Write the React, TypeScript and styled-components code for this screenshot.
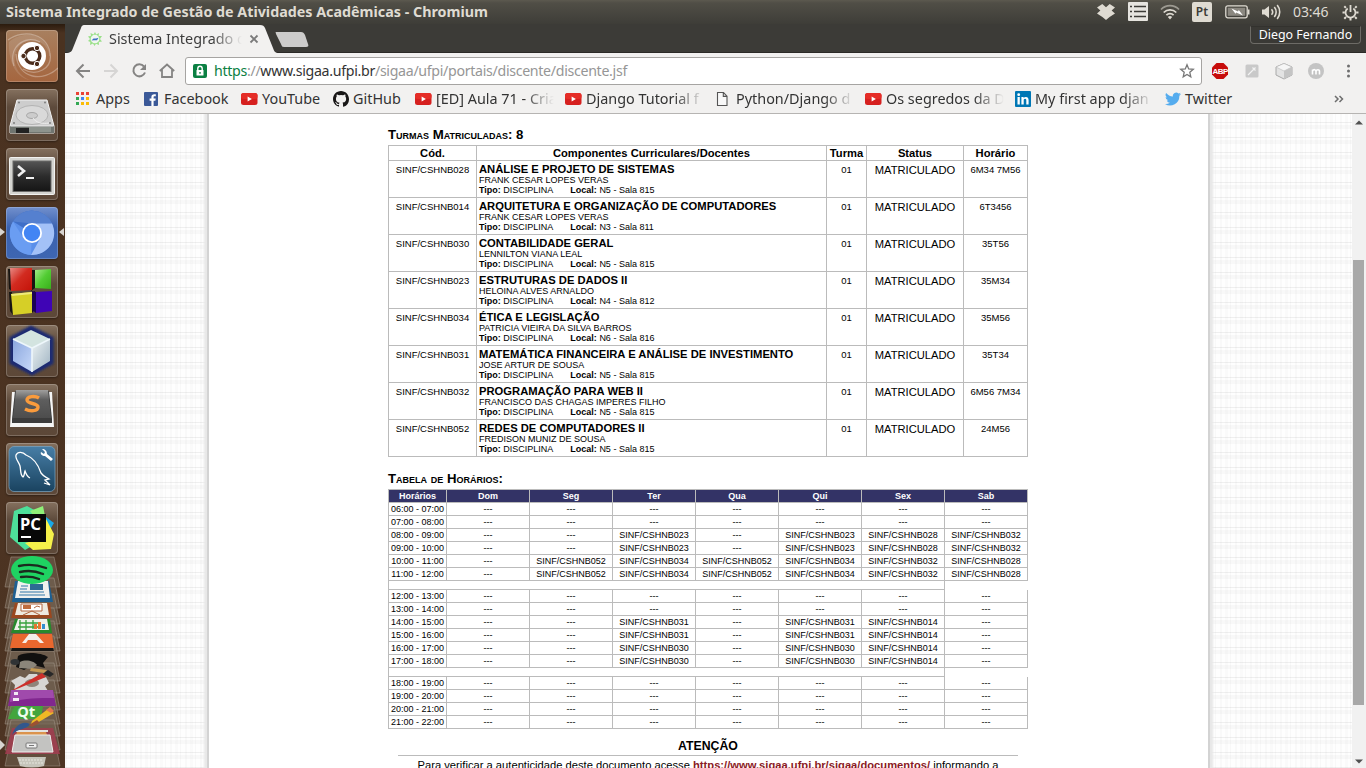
import React from 'react';
import styled, { createGlobalStyle } from 'styled-components';

const Global = createGlobalStyle`
  * { box-sizing: border-box; }
  body { margin: 0; overflow: hidden; }
`;

const ui = `'Noto Sans', 'Open Sans', sans-serif`;

const Screen = styled.div`
  width: 1366px; height: 768px; overflow: hidden;
  display: flex; flex-direction: column;
  font-family: ${ui}; background: #fff; color: #3c3c3c;
`;

const TopBar = styled.header`
  height: 24px; flex: none; display: flex; align-items: center;
  justify-content: space-between; padding: 0 7px 0 6px;
  background: linear-gradient(#5c594f 0, #504e46 3px, #3e3d38 24px);
  color: #dfdbd2;
`;
const Line = styled.span<{ $size: number; $ls?: number; $bold?: boolean; $w?: number }>`
  font-size: ${p => p.$size}px; letter-spacing: ${p => p.$ls ?? 0}px;
  font-weight: ${p => (p.$bold ? 700 : 400)};
  line-height: 20px; white-space: pre; flex: none;
  ${p => p.$w && `width: ${p.$w}px;`}
`;
const Tray = styled.div`
  display: flex; align-items: center; height: 24px;
  & > svg { display: block; flex: none; }
`;
const TrayGap = styled.i<{ $w: number }>`width: ${p => p.$w}px; flex: none;`;
const Lang = styled.span`
  width: 20px; height: 20px; border-radius: 2px; background: #dfdbd2; color: #3c3b37;
  font-size: 12px; line-height: 20px; text-align: center; font-weight: 600;
`;

const Desktop = styled.div`flex: 1; display: flex; min-height: 0;`;

const Launcher = styled.nav`
  width: 65px; flex: none; display: flex; flex-direction: column; gap: 7px;
  padding: 6px 0 0 6px; overflow: hidden; position: relative;
  background: linear-gradient(#2b1b0e 0, #4a3220 9px, #4d3423 100%);
`;
const Tile = styled.div<{ $bg?: string }>`
  width: 52px; height: 52px; flex: none; border-radius: 4px; overflow: hidden;
  background: ${p => p.$bg ?? 'linear-gradient(#85715f, #5d4a3b 35%, #5d4838)'};
  box-shadow: inset 0 0 0 1px rgba(255,255,255,.2), 0 1px 2px rgba(0,0,0,.35);
  & > svg { display: block; }
`;
const Stack = styled.div`margin: -5px 0 0 -6px; flex: none; & > svg { display: block; }`;
const Pip = styled.i<{ $y: number; $right?: boolean }>`
  position: absolute; top: ${p => p.$y}px; ${p => (p.$right ? 'right: 1px' : 'left: 0')};
  border: solid transparent; border-width: 4px 0;
  ${p => (p.$right ? 'border-right: 5px solid #d8d4d0' : 'border-left: 5px solid #d8d4d0')};
`;

const Browser = styled.main`flex: 1; display: flex; flex-direction: column; min-width: 0;`;
const TabStrip = styled.div`
  height: 29px; flex: none; background: #3c3b37; border-bottom: 1px solid #2b2a27;
  position: relative; display: flex; padding-left: 6px;
`;
const TabShape = styled.svg`position: absolute; left: 0; top: 0;`;
const Tab = styled.div`
  position: relative; width: 206px; height: 28px; display: flex; align-items: center;
  padding: 1px 0 0 17px;
`;
const Fade = styled.span<{ $w: number; $from?: number }>`
  width: ${p => p.$w}px; overflow: hidden; flex: none; display: flex;
  mask-image: linear-gradient(90deg, #000 ${p => p.$w - (p.$from ?? 30)}px, transparent 100%);
`;
const UserName = styled.div`
  position: absolute; right: 5px; top: 2px; height: 18px; width: 111px;
  border: 1px solid #6d6b66; border-top-color: #33322e; border-radius: 0 0 4px 4px; color: #fff;
  display: flex; align-items: center; justify-content: center; background: #3a3935;
`;

const Toolbar = styled.div`
  height: 36px; flex: none; background: #f2f1f0; display: flex; align-items: center;
  & > svg { display: block; flex: none; }
`;
const Address = styled.div`
  width: 1017px; height: 28px; border: 1px solid #a6a4a2; border-radius: 3px; background: #fff;
  display: flex; align-items: center; padding: 0 6px 0 7px; flex: none;
  & > svg { flex: none; }
`;
const Url = styled.span`
  flex: 1; padding-left: 7px; font-size: 14.2px; line-height: 20px; white-space: pre; color: #969696;
  letter-spacing: -0.32px;
  b { font-weight: 400; color: #0b8043; }
  i { font-style: normal; color: #333; }
`;
const Bookmarks = styled.div`
  height: 25px; flex: none; background: #f2f1f0; border-bottom: 1px solid #b6b4b2;
  display: flex; align-items: center; padding: 0 0 4px 11px; position: relative;
`;
const Bookmark = styled.div<{ $w: number }>`
  width: ${p => p.$w}px; flex: none; display: flex; align-items: center; color: #333; height: 20px;
  & > svg { display: block; flex: none; margin-right: 4px; }
`;

const Viewport = styled.section`flex: 1; display: flex; min-height: 0;`;
const Page = styled.div`
  flex: 1; display: flex; justify-content: center; overflow: hidden;
  background:
    repeating-linear-gradient(180deg, transparent 0 8px, rgba(0,0,0,.06) 8px 9px, transparent 9px 11px, rgba(0,0,0,.025) 11px 15px),
    repeating-linear-gradient(90deg, rgba(0,0,0,.02) 0 2px, transparent 2px 5px, rgba(0,0,0,.015) 5px 8px, transparent 8px 10px, rgba(0,0,0,.025) 10px 11px, transparent 11px 15px),
    #fefefe;
`;
const Sheet = styled.article`
  width: 999px; background: #fff; box-shadow: 0 0 0 2px #d3d3d3, 0 0 2px 5px #e8e8e8;
  padding: 13px 0 0 179px; font-family: 'Liberation Sans', Arial, sans-serif; color: #000;
`;
const Scroll = styled.div`
  width: 14px; background: #f1f1f1; display: flex; flex-direction: column; align-items: center;
  padding: 6px 0 4px; justify-content: space-between; position: relative;
  & > svg { display: block; }
`;
const Thumb = styled.div`position: absolute; left: 1px; top: 146px; width: 11px; height: 445px; background: #a8a8a8;`;

const Heading = styled.h2<{ $top?: number }>`
  margin: 0; font-size: 13.2px; line-height: 16px; height: 18px; margin-top: ${p => p.$top ?? 0}px;
  font-variant: small-caps; font-weight: 700;
`;

const Grid = styled.table`
  width: 640px; table-layout: fixed; border-collapse: separate; border-spacing: 0;
  border-top: 1px solid #bbb;
  td, th { padding: 0; border: solid #bbb; border-width: 0 1px 1px 0; overflow: hidden; white-space: nowrap; }
  td:first-child, th:first-child { border-left-width: 1px; }
`;
const ClassHead = styled.th`font-size: 11.2px; line-height: 14px; height: 15px;`;
const ClassCell = styled.td<{ $size: number }>`
  height: 37px; vertical-align: top; text-align: center;
  font-size: ${p => p.$size}px; line-height: 18px;
`;
const SubjectCell = styled.td`vertical-align: top; height: 37px;`;
const Subject = styled.div`padding-left: 2px; font-size: 9px; line-height: 10px;`;
const SubjectName = styled.div`font-size: 11.22px; line-height: 14px; font-weight: 700; padding-top: 1px; height: 14px;`;
const Room = styled.span`margin-left: 17px;`;
const DayHead = styled.th`background: #333366; color: #fff; font-size: 9px; line-height: 12px; height: 13px;`;
const Slot = styled.td`text-align: center; font-size: 9px; line-height: 12px; height: 13px;`;
const Break = styled.td`height: 9px; line-height: 0;`;
const Notice = styled.footer`width: 640px; padding: 8px 10px 0; text-align: center;`;
const NoticeTitle = styled.div`font-size: 12.3px; font-weight: 700; line-height: 18px; height: 19px; border-bottom: 1px solid #bbb;`;
const NoticeText = styled.p`
  margin: 0; font-size: 11.2px; line-height: 18px; white-space: nowrap;
  b { color: #8b1a24; }
`;

const classes: [string, string, string, string, string][] = [
  ['SINF/CSHNB028', 'ANÁLISE E PROJETO DE SISTEMAS', 'FRANK CESAR LOPES VERAS', 'N5 - Sala 815', '6M34 7M56'],
  ['SINF/CSHNB014', 'ARQUITETURA E ORGANIZAÇÃO DE COMPUTADORES', 'FRANK CESAR LOPES VERAS', 'N3 - Sala 811', '6T3456'],
  ['SINF/CSHNB030', 'CONTABILIDADE GERAL', 'LENNILTON VIANA LEAL', 'N5 - Sala 815', '35T56'],
  ['SINF/CSHNB023', 'ESTRUTURAS DE DADOS II', 'HELOINA ALVES ARNALDO', 'N4 - Sala 812', '35M34'],
  ['SINF/CSHNB034', 'ÉTICA E LEGISLAÇÃO', 'PATRICIA VIEIRA DA SILVA BARROS', 'N6 - Sala 816', '35M56'],
  ['SINF/CSHNB031', 'MATEMÁTICA FINANCEIRA E ANÁLISE DE INVESTIMENTO', 'JOSE ARTUR DE SOUSA', 'N5 - Sala 815', '35T34'],
  ['SINF/CSHNB032', 'PROGRAMAÇÃO PARA WEB II', 'FRANCISCO DAS CHAGAS IMPERES FILHO', 'N5 - Sala 815', '6M56 7M34'],
  ['SINF/CSHNB052', 'REDES DE COMPUTADORES II', 'FREDISON MUNIZ DE SOUSA', 'N5 - Sala 815', '24M56'],
];

/* Class number for each day, Dom to Sab; empty for a free hour, null for a break. */
const schedule: ([string, string[]] | null)[] = [
  ['06:00 - 07:00', ['', '', '', '', '', '', '']],
  ['07:00 - 08:00', ['', '', '', '', '', '', '']],
  ['08:00 - 09:00', ['', '', '023', '', '023', '028', '032']],
  ['09:00 - 10:00', ['', '', '023', '', '023', '028', '032']],
  ['10:00 - 11:00', ['', '052', '034', '052', '034', '032', '028']],
  ['11:00 - 12:00', ['', '052', '034', '052', '034', '032', '028']],
  null,
  ['12:00 - 13:00', ['', '', '', '', '', '', '']],
  ['13:00 - 14:00', ['', '', '', '', '', '', '']],
  ['14:00 - 15:00', ['', '', '031', '', '031', '014', '']],
  ['15:00 - 16:00', ['', '', '031', '', '031', '014', '']],
  ['16:00 - 17:00', ['', '', '030', '', '030', '014', '']],
  ['17:00 - 18:00', ['', '', '030', '', '030', '014', '']],
  null,
  ['18:00 - 19:00', ['', '', '', '', '', '', '']],
  ['19:00 - 20:00', ['', '', '', '', '', '', '']],
  ['20:00 - 21:00', ['', '', '', '', '', '', '']],
  ['21:00 - 22:00', ['', '', '', '', '', '', '']],
];

const YouTube = () => (
  <svg width="17" height="16" viewBox="0 0 17 16">
    <rect x="0" y="2" width="16.5" height="12" rx="2.5" fill="#d6201f" />
    <rect x="0" y="2" width="16.5" height="6" rx="2.5" fill="#e52d27" />
    <path d="M6.6 5.4v5l4.3-2.5z" fill="#fff" />
  </svg>
);
const Apps = () => (
  <svg width="16" height="16" viewBox="0 0 16 16">
    {['#ea4335', '#ea4335', '#ea4335', '#34a853', '#4285f4', '#fbbc05', '#34a853', '#fbbc05', '#fbbc05'].map((c, i) => (
      <rect key={i} x={(i % 3) * 5} y={1 + Math.floor(i / 3) * 5} width="3" height="3" fill={c} />
    ))}
  </svg>
);
const Facebook = () => (
  <svg width="16" height="16" viewBox="0 0 16 16">
    <rect x="0" y="1" width="14" height="14" rx="1" fill="#3b5998" />
    <path d="M9.6 15V9.7h1.8l.3-2.1H9.6V6.3c0-.6.2-1 1-1h1.2V3.3c-.2 0-.9-.1-1.6-.1-1.7 0-2.8 1-2.8 2.8v1.6H5.6v2.1h1.8V15z" fill="#fff" />
  </svg>
);
const GitHub = () => (
  <svg width="16" height="16" viewBox="0 0 16 16">
    <path fill="#191717" d="M8 0C3.58 0 0 3.58 0 8c0 3.54 2.29 6.53 5.47 7.59.4.07.55-.17.55-.38v-1.34c-2.01.37-2.53-.49-2.69-.94-.09-.23-.48-.94-.82-1.13-.28-.15-.68-.52-.01-.53.63-.01 1.08.58 1.23.82.72 1.21 1.87.87 2.33.66.07-.52.28-.87.51-1.07-1.78-.2-3.64-.89-3.64-3.95 0-.87.31-1.59.82-2.15-.08-.2-.36-1.02.08-2.12 0 0 .67-.21 2.2.82a7.6 7.6 0 0 1 4 0c1.53-1.04 2.2-.82 2.2-.82.44 1.1.16 1.92.08 2.12.51.56.82 1.27.82 2.15 0 3.07-1.87 3.75-3.65 3.95.29.25.54.73.54 1.48v2.19c0 .21.15.46.55.38A8 8 0 0 0 16 8c0-4.42-3.58-8-8-8z" />
  </svg>
);
const Doc = () => (
  <svg width="16" height="16" viewBox="0 0 16 16">
    <path d="M1.500 1.500h6l3.500 3.700v9.300H1.500zM7.300 1.800v3.600H11" fill="#f8f8f8" stroke="#555" strokeWidth="1.1" />
  </svg>
);
const LinkedIn = () => (
  <svg width="16" height="16" viewBox="0 0 16 16">
    <rect width="16" height="16" rx="1" fill="#0077b5" />
    <path d="M2.5 6.1h2.3v7.3H2.5zM6.4 6.1h2.2v1c.5-.8 1.3-1.2 2.3-1.2 2.1 0 2.7 1.4 2.7 3.3v4.2h-2.3V9.6c0-1-.2-1.8-1.2-1.8-1.1 0-1.4.8-1.4 1.8v3.8H6.4z" fill="#fff" />
    <circle cx="3.7" cy="3.7" r="1.4" fill="#fff" />
  </svg>
);
const Twitter = () => (
  <svg width="16" height="16" viewBox="0 0 24 24">
    <path fill="#55acee" d="M24 4.6a10 10 0 0 1-2.8.8 5 5 0 0 0 2.2-2.7c-1 .6-2 1-3.1 1.2a4.9 4.9 0 0 0-8.4 4.5C7.7 8.1 4.1 6.1 1.7 3.1a4.9 4.9 0 0 0 1.5 6.6c-.8 0-1.6-.2-2.2-.6v.1a4.9 4.9 0 0 0 3.9 4.8c-.7.2-1.5.2-2.2.1a4.9 4.9 0 0 0 4.6 3.4A9.9 9.900 0 0 1 0 19.500 14 14 0 0 0 21.500 7.100c1-.7 1.800-1.600 2.500-2.500z" />
  </svg>
);

const bookmarks: { label: string; w: number; icon: React.FC; fade?: boolean }[] = [
  { label: 'Apps', w: 68, icon: Apps },
  { label: 'Facebook', w: 97, icon: Facebook },
  { label: 'YouTube', w: 92, icon: YouTube },
  { label: 'GitHub', w: 82, icon: GitHub },
  { label: '[ED] Aula 71 - Cria', w: 150, icon: YouTube, fade: true },
  { label: 'Django Tutorial f', w: 151, icon: YouTube, fade: true },
  { label: 'Python/Django d', w: 149, icon: Doc, fade: true },
  { label: 'Os segredos da D', w: 150, icon: YouTube, fade: true },
  { label: 'My first app djan', w: 150, icon: LinkedIn, fade: true },
  { label: 'Twitter', w: 90, icon: Twitter },
];

const Dropbox = () => (
  <svg width="20" height="18" viewBox="0 0 20 18" fill="#dfdbd2">
    <path d="M6.3 1 10 4.2 13.7 1 19 4.4 15.6 7.6 19 10.6 13.6 14 10 17 6.4 14 1 10.6 4.4 7.6 1 4.4z" />
  </svg>
);
const ListIcon = () => (
  <svg width="20" height="20" viewBox="0 0 20 20">
    <rect x="0" y="0" width="20" height="19" rx="1" fill="#e6e4df" />
    <path d="M6 4.500h12M6 9.500h12M6 14.500h12M2 4.500h2M2 9.500h2M2 14.500h2" stroke="#3c3b37" strokeWidth="1.300" />
  </svg>
);
const Wifi = () => (
  <svg width="20" height="16" viewBox="0 0 20 16" fill="none" stroke="#dfdbd2" strokeWidth="1.7">
    <path d="M1 5.500a12.500 12.500 0 0 1 18 0" opacity=".55" /><path d="M3.700 8.500a9 9 0 0 1 12.600 0" /><path d="M6.400 11.200a5 5 0 0 1 7.200 0" />
    <path d="M10 15.400 7.800 13a3.200 3.200 0 0 1 4.400 0z" fill="#dfdbd2" stroke="none" />
  </svg>
);
const Battery = () => (
  <svg width="25" height="14" viewBox="0 0 25 14">
    <rect x=".8" y=".8" width="21.4" height="12" rx="2" fill="none" stroke="#dfdbd2" strokeWidth="1.3" />
    <rect x="2.8" y="2.8" width="17.4" height="8" fill="#8b8880" />
    <path d="M22.800 4.500h1.700v5h-1.700z" fill="#dfdbd2" />
    <path d="m6.500 3.500 6.500 3 .8-1.500 4.200 5.500-6.800-3-.7 1.200z" fill="#fff" />
  </svg>
);
const Volume = () => (
  <svg width="21" height="16" viewBox="0 0 21 16" fill="none" stroke="#dfdbd2" strokeWidth="1.6">
    <path d="M1 5.500h2.500L8 2v12l-4.500-3.500H1z" fill="#dfdbd2" stroke="none" />
    <path d="M10.500 5.200a4.300 4.300 0 0 1 0 5.600M13.300 3a7.600 7.600 0 0 1 0 10M16.200 1a11 11 0 0 1 0 14" />
  </svg>
);
const Power = () => (
  <svg width="17" height="17" viewBox="0 0 17 17" fill="none" stroke="#dfdbd2">
    <path d="M5.700 4.500a5 5 0 1 0 5.600 0" strokeWidth="1.8" /><path d="M8.500 1v7" strokeWidth="1.8" />
    <path d="M3.900 3.900 2.300 2.300M13.100 3.900l1.600-1.600M2.800 8.500H.5M14.200 8.500h2.300M4 13l-1.700 1.700M13 13l1.700 1.700M8.500 14v2.500" strokeWidth="2" />
  </svg>
);

const UbuntuIcon = () => (
  <svg width="52" height="52" viewBox="0 0 52 52">
    <g fill="none" stroke="#fff" strokeOpacity=".3" strokeWidth="1.3">
      <path d="M2 10C18-2 44 4 44 26M44 23c3 16-14 24-27 16M8 36C2 18 18 4 34 12M52 38c-14 14-40 12-42-14" />
    </g>
    <path d="M3 12C18-1 44 4 43 24 40 9 20 5 12 18 5 28 9 45 24 50 8 48 2 27 3 12z" fill="#fff" opacity=".12" />
    <circle cx="26" cy="26" r="14" fill="#fff" />
    <circle cx="26.500" cy="26" r="7.300" fill="none" stroke="#4b2c1b" strokeWidth="3.400" />
    <g fill="#4b2c1b" stroke="#fff" strokeWidth="1"><circle cx="17.500" cy="26" r="2.700" /><circle cx="31" cy="18" r="2.700" /><circle cx="31" cy="34" r="2.700" /></g>
  </svg>
);
const DiskIcon = () => (
  <svg width="52" height="52" viewBox="0 0 52 52">
    <path d="M11 11h30l7 26v7H4v-7z" fill="#cdcdcd" stroke="#f4f4f4" />
    <path d="M4 37h44v7H4z" fill="#707570" /><path d="M10 39h13v5H10z" fill="#222" /><path d="M23 38h22v5H23z" fill="#8d938d" />
    <ellipse cx="26" cy="26" rx="16" ry="9.500" fill="#d9d9d9" stroke="#b3b3b3" /><ellipse cx="26" cy="26.500" rx="5.500" ry="3" fill="#ccc" stroke="#a6a6a6" />
    <path d="M27 29c3 5 10 6 16 5" fill="none" stroke="#eee" /><path d="M4.500 37h43" stroke="#eee" />
    <g fill="#777"><circle cx="13" cy="13.500" r=".9" /><circle cx="39" cy="13.500" r=".9" /><circle cx="8" cy="34" r=".9" /><circle cx="44" cy="34" r=".9" /></g>
  </svg>
);
const TermIcon = () => (
  <svg width="52" height="52" viewBox="0 0 52 52">
    <defs><linearGradient id="term" x2="0" y2="1"><stop stopColor="#555" /><stop offset=".5" stopColor="#2c2c2c" /><stop offset="1" stopColor="#151515" /></linearGradient></defs>
    <rect x="3.500" y="9.500" width="45" height="37" rx="1" fill="#d4d4d0" stroke="#f2f2f0" />
    <rect x="7" y="13" width="38" height="30.500" fill="url(#term)" stroke="#6a6a68" />
    <path d="m12 18 6 5-6 5" fill="none" stroke="#f0f0f0" strokeWidth="2.600" /><path d="M20 30h8" stroke="#f0f0f0" strokeWidth="2" />
  </svg>
);
const ChromiumIcon = () => (
  <svg width="52" height="52" viewBox="0 0 52 52">
    <circle cx="26" cy="26" r="22" fill="#5a8fea" />
    <path d="M26 26 7 14.500A22 22 0 0 1 46 16.500z" fill="#3f6fc8" /><path d="M7 14.500A22 22 0 0 1 46 16.500H26z" fill="#5580cf" />
    <path d="M26 16.500h20A22 22 0 0 1 25 48l9.500-17z" fill="#a3c1f7" /><path d="M7 14.500 17.500 31l8 6L25 48A22 22 0 0 1 7 14.500z" fill="#6a9df2" />
    <circle cx="26" cy="26" r="10" fill="#fff" /><circle cx="26" cy="26" r="8.200" fill="#4285f4" />
  </svg>
);
const BlocksIcon = () => (
  <svg width="52" height="52" viewBox="0 0 52 52">
    <defs>
      <linearGradient id="red" x2="1" y2="1"><stop stopColor="#e88a84" /><stop offset=".45" stopColor="#d22b20" /><stop offset="1" stopColor="#c41208" /></linearGradient>
      <linearGradient id="green" x2="1" y2="1"><stop stopColor="#a5ec8c" /><stop offset=".5" stopColor="#52cc33" /><stop offset="1" stopColor="#39b01b" /></linearGradient>
    </defs>
    <path d="M2 3h4v22l-3-2zM25 4h4v18l-4 3zM3 26h3l1 23-3-4zM25 27l4-2v18l-3 4z" fill="#171512" />
    <path d="M4 2h22v22L5 25z" fill="url(#red)" />
    <path d="m29 4 16-1v20l-16-1z" fill="url(#green)" />
    <path d="m5 28 21-2v21L7 49z" fill="#d6cf27" /><path d="m5 28 21-2v2L6 30z" fill="#efea7a" />
    <path d="m30 26 16-1v20l-16 2z" fill="#3f04b5" /><path d="m26 25 4 1v21l-4-3z" fill="#1b0254" />
  </svg>
);
const CubeIcon = () => (
  <svg width="52" height="52" viewBox="0 0 52 52">
    <defs>
      <linearGradient id="cl" x2="1" y2="1"><stop stopColor="#8aa6dd" /><stop offset="1" stopColor="#c8dafa" /></linearGradient>
      <linearGradient id="cr" x2="1" y2="1"><stop stopColor="#eef4f4" /><stop offset="1" stopColor="#9fb3c2" /></linearGradient>
      <filter id="halo"><feGaussianBlur stdDeviation="1" /></filter>
    </defs>
    <path d="M25 2 46 13v25L26 49 5 38V13z" fill="#1c2c72" stroke="#1c2c72" strokeWidth="3" strokeLinejoin="round" filter="url(#halo)" />
    <path d="M25 5 44 14 26 23 7 14z" fill="#d3e4e0" /><path d="m7 14 19 9v24L7 36z" fill="url(#cl)" /><path d="m26 23 18-9v22l-18 11z" fill="url(#cr)" />
    <path d="m7 14 19 9 18-9M26 23v24" stroke="#eef7fb" strokeWidth="1.600" fill="none" />
  </svg>
);
const SublimeIcon = () => (
  <svg width="52" height="52" viewBox="0 0 52 52">
    <defs><linearGradient id="key" x2="0" y2="1"><stop stopColor="#a09f9e" /><stop offset=".35" stopColor="#5e5e5e" /><stop offset="1" stopColor="#4d4d4d" /></linearGradient></defs>
    <path d="M6 8h40l2 35H4z" fill="#f5f5f5" /><path d="M9 7h34l3 28v4H6v-4z" fill="#3c3c3c" /><path d="M10 6h32l3 28H7z" fill="url(#key)" />
    <path d="M33 14c-4-2.500-12-2-12 2 0 4 11 3 11 7 0 4.500-8 4.500-13 2" fill="none" stroke="#fa9b3c" strokeWidth="3.400" />
  </svg>
);
const MysqlIcon = () => (
  <svg width="52" height="52" viewBox="0 0 52 52">
    <defs><linearGradient id="sea" x2="0" y2="1"><stop stopColor="#477ea6" /><stop offset="1" stopColor="#1a4360" /></linearGradient></defs>
    <rect x="3" y="3.500" width="46" height="45" rx="5" fill="url(#sea)" stroke="#7aa7c7" strokeWidth=".7" />
    <path d="M24 35c-2-1-4-4-5-7-1 2 0 4-2 6-3-2-2-7-3-11-1-4-5-7-4-11 2-4 7-3 10 0 8 3 12 9 15 18 3 4 5 4 8 6l-4 1 5 5-6-2" fill="none" stroke="#fff" strokeWidth="1.300" />
    <path d="M36 6c3 0 5 2 5 5l6 5-2 2-6-5c-3 0-5-2-4-4l3 2 1-2z" fill="#fff" />
  </svg>
);
const PyCharmIcon = () => (
  <svg width="52" height="52" viewBox="0 0 52 52">
    <path d="M8 9 21 4l11 6-6 34-7 4L4 35z" fill="#4de09a" /><path d="M24 9 37 4l2 10-8 4z" fill="#8ff078" /><path d="M40 15l8 6-6 10-4-8z" fill="#18a8e8" />
    <path d="m39 15 9 17-3 15-18 1-8-7 19-5z" fill="#f5f04a" />
    <rect x="12" y="12" width="28" height="28" fill="#080808" />
    <text x="14" y="27.500" fill="#fff" fontFamily="'Noto Sans', sans-serif" fontWeight="700" fontSize="16.500">PC</text>
    <path d="M15 34h10v2H15z" fill="#fff" />
  </svg>
);
const StackIcon = () => (
  <svg width="65" height="212" viewBox="0 0 65 212">
    <g fill="#78695a" fillOpacity=".5" stroke="#a5988c" strokeOpacity=".5">
      {[1, 22, 38, 52, 65, 80, 95, 107, 124, 138, 150, 164, 180].map(y => (
        <path key={y} d={`M11 ${y}h43l6 30H5z`} />
      ))}
    </g>
    <g transform="translate(0 -6)">
      <path d="m15 31 34 0 4 21H12z" fill="#1e5f91" /><path d="M18 31h30l2 17H15z" fill="#f0f1ee" /><path d="M21 36h7M20 39h7M20 42h24M19 45h26" stroke="#3076a8" /><path d="M30 34h13v6H30z" fill="#2d6b93" />
      <path d="m15 53 35 0 2 15H11z" fill="#9b471e" /><path d="M18 53h29l2 12H15z" fill="#eee9df" /><path d="M21 54h21v7H21z" fill="#fff" stroke="#b1653f" /><path d="M23 55h8v4h-8z" fill="#c06c3d" /><path d="m23 65 9-4 8 4M34 58l3-2 3 1" stroke="#b1653f" fill="none" />
      <path d="m15 69 35 0 2 14H11z" fill="#27892c" /><path d="M18 69h29l2 11H14z" fill="#f0f2ea" /><path d="M20 70v10M26 70v10M19 73h21M18 77h22M33 70v9" stroke="#38a33e" strokeWidth="1.300" /><path d="M34 79v-5h3v5zM38 79v-7h3v7z" fill="#e87831" /><path d="M42 79v-5h3v5z" fill="#348fd1" />
      <path d="M13 84h39l2 14H10z" fill="#e9672e" /><path d="m29 84-7 9h4l2-3h9l3 3h4l-8-9z" fill="#f5eee9" />
    </g>
    <ellipse cx="32" cy="14" rx="21" ry="14" fill="#1fd262" />
    <path d="M19 10c9-2 19-1 27 2M20 16c8-2 16-1 23 2M21 21c7-1 13 0 18 2" fill="none" stroke="#1b2a1f" strokeWidth="2.400" strokeLinecap="round" />
    <path d="M12 92h41l1 3H11z" fill="#1a1816" />
    <g transform="translate(0 -8)">
      <path d="M18 108c8-5 24-3 30 1l-5 6 2 5-12-3-9 5-8-3z" fill="#11100f" /><ellipse cx="15" cy="114" rx="4.500" ry="3" fill="#303335" /><path d="M20 114c6-3 14-1 17 3l-5 4-13-1z" fill="#8b857a" />
      <path d="m20 128 5 2 4-4h8l2 4 7-1 3 6-4 3 3 5-8 3-7-2-3 3-9-3-7-1 1-6-4-4z" fill="#d7d6d4" /><ellipse cx="32" cy="135" rx="7" ry="4" fill="#8f847a" />
      <path d="m31 120 16 2-3 3-14-2z" fill="#c49952" />
      <path d="M11 143 42 125l4 4-34 14z" fill="#cd2f2a" /><path d="m43 126 5-4 6 4-4 3z" fill="#282828" />
    </g>
    <g transform="translate(0 -14)">
      <path d="M11 148h42l3 16H8z" fill="#81278f" /><path d="M11 148h42l1 8c-16 0-28 0-44 4z" fill="#a04aac" /><path d="M14 150h4v3h-4zM13 156h6v3h-6z" fill="#f2e9f4" />
      <path d="M15 164h28l-2 13H8z" fill="#43a53d" /><text x="17" y="175" fontSize="15" fontWeight="700" fill="#efffee" fontFamily="'Noto Sans', sans-serif">Qt</text>
      <path d="M11 164h10l-6 13H8z" fill="#43a53d" opacity=".5" />
    </g>
    <path d="m12 172 41 0 7 26H5z" fill="#9e3d4f" fillOpacity=".9" />
    <path d="m32 165 16-12 6 4-17 10-6 1z" fill="#efb825" /><path d="m46 154 4-3 4 4-3 2z" fill="#e3764f" />
    <path d="M17 176h29l2 6H15z" fill="#db934d" /><path d="M16 174h32v2H16z" fill="#e4e2df" /><path d="M15 179h35l3 17H12z" fill="#c3c3c1" stroke="#efefed" /><rect x="26" y="187" width="11" height="5" rx="1" fill="#eee" stroke="#777" /><path d="M29 189.500h5" stroke="#777" />
    <path d="M12 179c3-9 10-15 18-11-3 6-13 4-18 11z" fill="#32578d" /><path d="m29 169 8-5 3 3-8 4z" fill="#9a5133" />
    <path d="M17 201h29l-2 9c-8 2-16 2-24 0z" fill="#c6c5bb" /><path d="M19 204h24M20 207h23" stroke="#e6e6df" strokeDasharray="2 1" />
    <path d="m0 184 5 5-5 5z" fill="#d8d4d0" />
  </svg>
);

const App = () => (
  <Screen>
    <Global />
    <TopBar>
      <Line $size={14.3} $bold>Sistema Integrado de Gestão de Atividades Acadêmicas - Chromium</Line>
      <Tray>
        <Dropbox /><TrayGap $w={12} /><ListIcon /><TrayGap $w={12} /><Wifi /><TrayGap $w={12} />
        <Lang>Pt</Lang><TrayGap $w={13} /><Battery /><TrayGap $w={11} /><Volume /><TrayGap $w={11} />
        <Line $size={14} $w={37} $ls={-0.1}>03:46</Line><TrayGap $w={12} /><Power />
      </Tray>
    </TopBar>
    <Desktop>
      <Launcher>
        <Tile $bg="linear-gradient(#a8805f, #a5663f)"><UbuntuIcon /></Tile>
        <Tile><DiskIcon /></Tile>
        <Tile><TermIcon /></Tile>
        <Tile $bg="linear-gradient(#7290cd, #3a62b0 40%, #3e66b1)"><ChromiumIcon /></Tile>
        <Tile><BlocksIcon /></Tile>
        <Tile><CubeIcon /></Tile>
        <Tile><SublimeIcon /></Tile>
        <Tile><MysqlIcon /></Tile>
        <Tile><PyCharmIcon /></Tile>
        <Stack><StackIcon /></Stack>
        <Pip $y={204} /><Pip $y={204} $right />
      </Launcher>
      <Browser>
        <TabStrip>
          <TabShape width="250" height="29" viewBox="0 0 250 29">
            <path d="M0 29c6 0 7-2 8-5l8-20c1-3 2-3 4-3h175c3 0 4 1 5 3l8 20c1 3 2 5 6 5z" fill="#f2f1f0" />
            <path d="M211 8h25c2 0 3 1 4 3l3 9c1 2 0 3-2 3h-21c-2 0-3 0-4-3l-5-10c0-1-1-2 0-2z" fill="#cdcccb" />
          </TabShape>
          <Tab>
            <svg width="14" height="16" viewBox="0 0 14 16">
              <path d="m7 1 1.300 2.500L11 2l-.4 3L14 5l-2 3 2 2.500-3.200.6.2 3-3-1.300L6.500 15 5 12.600 2 14l.3-3L0 10l2-2L0 5.500l3-.8L2.500 2l3 1.400z" fill="#9be08a" />
              <circle cx="7" cy="8" r="4.300" fill="#f2f6f2" /><path d="M3.500 9.500 5.500 7.500h2.500l2.500-.8L9 9.300H6z" fill="#3c72c0" />
            </svg>
            <TrayGap $w={7} />
            <Fade $w={133}><Line $size={14.4}>Sistema Integrado d</Line></Fade>
            <TrayGap $w={7} />
            <svg width="10" height="10" viewBox="0 0 10 10"><path d="m1.500 1.500 7 7m0-7-7 7" stroke="#7a7a7a" strokeWidth="1.800" /></svg>
          </Tab>
          <UserName><Line $size={12.4}>Diego Fernando</Line></UserName>
        </TabStrip>
        <Toolbar>
          <svg width="120" height="36" viewBox="0 0 120 36" fill="none" stroke="#858483" strokeWidth="2">
            <path d="M25 18H12.500M18.500 11.500 12 18l6.500 6.500" />
            <path d="M39 18h12.500M45.500 11.500 52 18l-6.500 6.500" stroke="#d6d5d4" />
            <path d="M79 13.500a6 6 0 1 0 1 6" /><path d="M81 11v6h-6z" fill="#858483" stroke="none" />
            <path d="M94.800 18 102 11.500l7.200 6.500M97 16.500V24h10v-7.500" strokeWidth="1.800" />
          </svg>
          <Address>
            <svg width="14" height="14" viewBox="0 0 14 14">
              <rect width="14" height="14" rx="2" fill="#0b8043" /><rect x="3.500" y="6" width="7" height="5.500" rx=".5" fill="#fff" />
              <path d="M4.800 6V4.500a2.200 2.200 0 0 1 4.400 0V6" fill="none" stroke="#fff" strokeWidth="1.400" /><path d="M6.300 8h1.400v1.700H6.300z" fill="#0b8043" />
            </svg>
            <Url><b>https</b>://<i>www.sigaa.ufpi.br</i>/sigaa/ufpi/portais/discente/discente.jsf</Url>
            <svg width="16" height="16" viewBox="0 0 16 16"><path d="m8 1.800 1.700 4.100 4.600.4-3.500 3 1 4.500L8 11.400l-3.800 2.400 1-4.500-3.500-3 4.600-.4z" fill="none" stroke="#777" strokeWidth="1.300" /></svg>
          </Address>
          <svg width="163" height="36" viewBox="0 0 163 36">
            <path d="M14.500 10h7l4.500 4.500v7L21.500 26h-7L10 21.500v-7z" fill="#c70d0c" />
            <text x="10.600" y="21" fontSize="8" fontWeight="700" fill="#fff" fontFamily="'Liberation Sans', sans-serif" letterSpacing="-.6">ABP</text>
            <rect x="43.500" y="11.500" width="13" height="13" rx="1.500" fill="#c9c9c9" /><path d="m46 22 6-6m-1.500-1.500 3 3m0-3-3 3" stroke="#f3f3f3" strokeWidth="1.200" />
            <path d="m82 10.500 8 3.500v8l-8 4-8-4v-8z" fill="#e3e3e3" stroke="#aaa" /><path d="m74 14 8 4 8-4-8-3.500z" fill="#f6f6f6" stroke="#bbb" strokeWidth=".6" /><path d="m82 18 8-4v8l-8 4z" fill="#c4c4c4" />
            <circle cx="114" cy="18" r="8" fill="#c4c4c4" /><path d="M110.500 21.500v-5m0 1.300c1-1.700 3.500-1.500 3.500.6v3.100m0-3.100c.5-2.100 3.500-2.300 3.500.1v3" fill="none" stroke="#fff" strokeWidth="1.600" />
            <g fill="#6e6e6e"><circle cx="146.500" cy="13" r="1.500" /><circle cx="146.500" cy="18" r="1.500" /><circle cx="146.500" cy="23" r="1.500" /></g>
          </svg>
        </Toolbar>
        <Bookmarks>
          {bookmarks.map(b => (
            <Bookmark key={b.label} $w={b.w}>
              <b.icon />
              {b.fade ? <Fade $w={118}><Line $size={14.4}>{b.label}</Line></Fade> : <Line $size={14.4}>{b.label}</Line>}
            </Bookmark>
          ))}
          <svg width="100" height="16" viewBox="0 0 100 16"><path d="m80 5 3 3-3 3m4.500-6 3 3-3 3" fill="none" stroke="#6e6e6e" strokeWidth="1.500" /></svg>
        </Bookmarks>
        <Viewport>
          <Page>
            <Sheet>
              <Heading>Turmas Matriculadas: 8</Heading>
              <Grid>
                <colgroup>{[89, 350, 40, 97, 64].map((w, i) => <col key={i} width={w} />)}</colgroup>
                <thead><tr>{['Cód.', 'Componentes Curriculares/Docentes', 'Turma', 'Status', 'Horário'].map(h => <ClassHead key={h}>{h}</ClassHead>)}</tr></thead>
                <tbody>
                  {classes.map(([code, name, teacher, room, time]) => (
                    <tr key={code}>
                      <ClassCell $size={9.5}>{code}</ClassCell>
                      <SubjectCell>
                        <Subject>
                          <SubjectName>{name}</SubjectName>
                          <div>{teacher}</div>
                          <div><b>Tipo:</b> DISCIPLINA<Room><b>Local:</b> {room}</Room></div>
                        </Subject>
                      </SubjectCell>
                      <ClassCell $size={9.5}>01</ClassCell>
                      <ClassCell $size={11.2}>MATRICULADO</ClassCell>
                      <ClassCell $size={9.5}>{time}</ClassCell>
                    </tr>
                  ))}
                </tbody>
              </Grid>
              <Heading $top={14}>Tabela de Horários:</Heading>
              <Grid>
                <colgroup>{[59, 83, 83, 83, 83, 83, 83, 83].map((w, i) => <col key={i} width={w} />)}</colgroup>
                <thead><tr>{['Horários', 'Dom', 'Seg', 'Ter', 'Qua', 'Qui', 'Sex', 'Sab'].map(d => <DayHead key={d}>{d}</DayHead>)}</tr></thead>
                <tbody>
                  {schedule.map((row, i) => row ? (
                    <tr key={i}><Slot>{row[0]}</Slot>{row[1].map((c, j) => <Slot key={j}>{c ? `SINF/CSHNB${c}` : '---'}</Slot>)}</tr>
                  ) : <tr key={i}><Break colSpan={7} /></tr>)}
                </tbody>
              </Grid>
              <Notice>
                <NoticeTitle>ATENÇÃO</NoticeTitle>
                <NoticeText>Para verificar a autenticidade deste documento acesse <b>https://www.sigaa.ufpi.br/sigaa/documentos/</b> informando a</NoticeText>
              </Notice>
            </Sheet>
          </Page>
          <Scroll>
            <svg width="8" height="5" viewBox="0 0 8 5"><path d="m0 4.500 4-4 4 4z" fill="#505050" /></svg>
            <Thumb />
            <svg width="8" height="5" viewBox="0 0 8 5"><path d="m0 .5 4 4 4-4z" fill="#505050" /></svg>
          </Scroll>
        </Viewport>
      </Browser>
    </Desktop>
  </Screen>
);

export default App;
